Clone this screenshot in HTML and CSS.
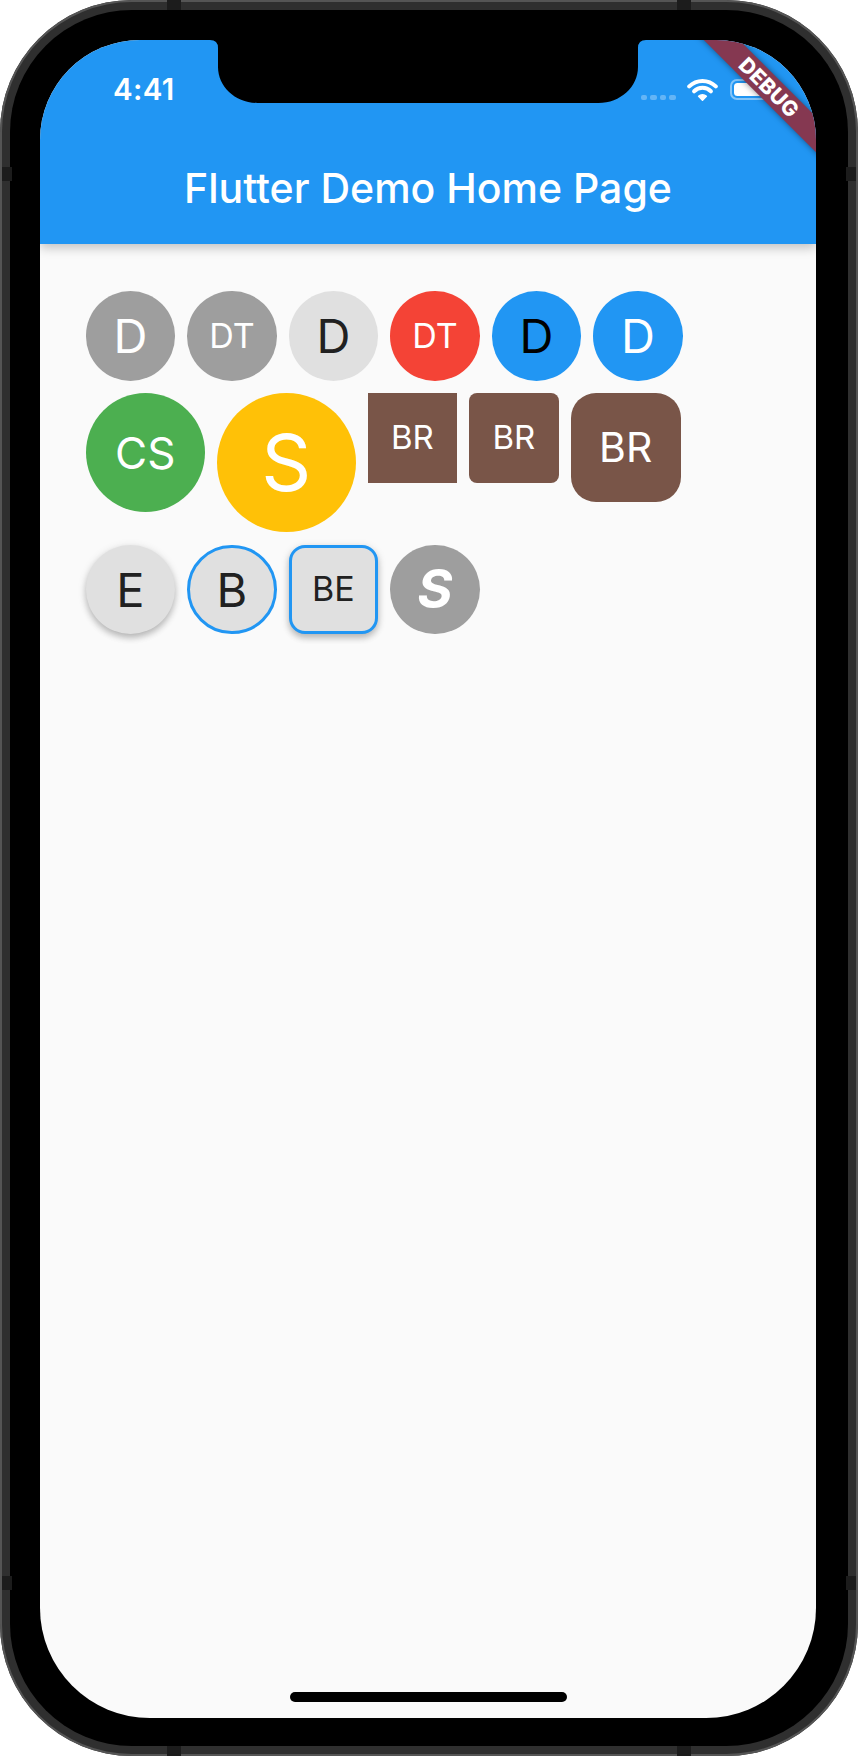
FILE: index.html
```html
<!DOCTYPE html>
<html lang="en">
<head>
<meta charset="utf-8">
<title>Flutter Demo Home Page</title>
<link rel="stylesheet" href="styles.css">
</head>
<body>
<div class="phone">
  <div class="bezel">
    <div class="screen">
      <header class="appbar">
        <div class="status">
          <span class="time">4:41</span>
          <div class="status-icons">
            <div class="signal"><i></i><i></i><i></i><i></i></div>
            <svg class="wifi" viewBox="0 0 31 24" width="31" height="24">
              <path d="M2.2 8.4 A19 19 0 0 1 28.8 8.4" fill="none" stroke="#fff" stroke-width="4" stroke-linecap="round"/>
              <path d="M7.1 13.3 A12 12 0 0 1 23.9 13.3" fill="none" stroke="#fff" stroke-width="4" stroke-linecap="round"/>
              <path d="M15.5 22.2 L11.6 18.3 A5.5 5.5 0 0 1 19.4 18.3 Z" fill="#fff" stroke="#fff" stroke-width="1.5" stroke-linejoin="round"/>
            </svg>
            <div class="battery"><div class="battery-level"></div></div>
          </div>
        </div>
        <div class="toolbar">
          <h1 class="title">Flutter Demo Home Page</h1>
        </div>
      </header>

      <main class="content">
        <div class="avatars">
          <div class="av md circle grey t-white fs-d">D</div>
          <div class="av md circle grey t-white fs-dt">DT</div>
          <div class="av md circle light t-dark fs-d">D</div>
          <div class="av md circle red t-white fs-dt">DT</div>
          <div class="av md circle blue t-black fs-d">D</div>
          <div class="av md circle blue t-white fs-d">D</div>

          <div class="av lg circle green t-white fs-cs">CS</div>
          <div class="av xl circle amber t-white fs-s">S</div>
          <div class="av md brown t-white fs-br">BR</div>
          <div class="av md brown r-sm t-white fs-br">BR</div>
          <div class="av ml brown r-lg t-white fs-br2">BR</div>

          <div class="av md circle light t-dark fs-d elevated">E</div>
          <div class="av md circle light t-dark fs-d bordered">B</div>
          <div class="av md light r-md t-dark fs-dt bordered elevated">BE</div>
          <div class="av md circle grey t-white fs-bi">S</div>
        </div>
      </main>

      <div class="home-indicator"></div>
      <svg class="notch" viewBox="0 0 436 63" width="436" height="63">
        <path d="M0 0 Q8 0 8 8 L8 27 C8 46.9 25.7 63 47.5 63 L388.5 63 C410.3 63 428 46.9 428 27 L428 8 Q428 0 436 0 Z" fill="#000"/>
      </svg>
      <div class="debug-banner">DEBUG</div>
    </div>
  </div>
  <span class="mark mark-top-l"></span>
  <span class="mark mark-top-r"></span>
  <span class="mark mark-bot-l"></span>
  <span class="mark mark-bot-r"></span>
  <span class="mark mark-side-lt"></span>
  <span class="mark mark-side-lb"></span>
  <span class="mark mark-side-rt"></span>
  <span class="mark mark-side-rb"></span>
</div>
</body>
</html>
```

FILE: styles.css
```css
* { box-sizing: border-box; }

html, body {
  margin: 0;
  padding: 0;
  background: #ffffff;
}

body {
  width: 858px;
  height: 1756px;
  overflow: hidden;
  font-family: Inter, "Noto Sans", "Liberation Sans", sans-serif;
}

.phone {
  position: relative;
  width: 858px;
  height: 1756px;
  padding: 10px;
  border-radius: 132px;
  background: #2f2f2f;
  box-shadow: inset 0 0 0 2px #555555;
}

.bezel {
  width: 100%;
  height: 100%;
  padding: 30px;
  border-radius: 122px;
  background: #000000;
}

.screen {
  position: relative;
  width: 776px;
  height: 1678px;
  border-radius: 100px 100px 110px 110px;
  overflow: hidden;
  background: #fafafa;
  display: flex;
  flex-direction: column;
}

/* ---------- App bar ---------- */
.appbar {
  flex: 0 0 204px;
  background: #2196f3;
  color: #ffffff;
  display: flex;
  flex-direction: column;
  box-shadow: 0 4px 10px rgba(0, 0, 0, 0.22);
  position: relative;
  z-index: 1;
}

.status {
  height: 91px;
  padding: 35px 45px 0 73px;
  display: flex;
  justify-content: space-between;
  align-items: flex-start;
}

.time {
  font-size: 29.5px;
  font-weight: 600;
  line-height: 29px;
  letter-spacing: 0.3px;
}

.status-icons {
  height: 29px;
  display: flex;
  align-items: center;
}

.signal {
  height: 23px;
  display: flex;
  align-items: flex-end;
  gap: 3px;
  margin-right: 11px;
  padding-bottom: 1px;
}

.signal i {
  display: block;
  width: 6.5px;
  height: 5px;
  border-radius: 2px;
  background: rgba(255, 255, 255, 0.3);
}

.wifi {
  display: block;
  margin-right: 12.5px;
}

.battery {
  position: relative;
  width: 40.6px;
  height: 21.6px;
  border: 2px solid rgba(255, 255, 255, 0.45);
  border-radius: 7px;
  padding: 2px;
}

.battery::after {
  content: "";
  position: absolute;
  right: -5px;
  top: 6px;
  width: 3px;
  height: 6px;
  border-radius: 0 2px 2px 0;
  background: rgba(255, 255, 255, 0.45);
}

.battery-level {
  width: 100%;
  height: 100%;
  border-radius: 3.5px;
  background: #ffffff;
}

.toolbar {
  flex: 1;
  display: flex;
  align-items: center;
  justify-content: center;
  padding-top: 2px;
}

.title {
  margin: 0;
  font-size: 41px;
  font-weight: 500;
  line-height: 1;
  letter-spacing: 0;
}

/* ---------- Content ---------- */
.content {
  flex: 1;
  padding: 47px 0 0 45.7px;
}

.avatars {
  width: 684px;
  display: flex;
  flex-wrap: wrap;
  align-items: flex-start;
  gap: 12.5px 12px;
}

.av {
  flex: 0 0 auto;
  display: flex;
  align-items: center;
  justify-content: center;
  line-height: 1;
  font-weight: 400;
}

.md { width: 89.5px; height: 89.5px; }
.ml { width: 110px; height: 109px; }
.lg { width: 119px; height: 119px; }
.xl { width: 139px; height: 139px; }

.circle { border-radius: 50%; }
.r-sm { border-radius: 8px; }
.r-md { border-radius: 16px; }
.r-lg { border-radius: 25px; }

.grey  { background: #9e9e9e; }
.light { background: #e0e0e0; }
.red   { background: #f44336; }
.blue  { background: #2196f3; }
.green { background: #4caf50; }
.amber { background: #ffc107; }
.brown { background: #795548; }

.t-white { color: #ffffff; }
.t-dark  { color: #212121; }
.t-black { color: #000000; }

.fs-d   { font-size: 47px; }
.fs-dt  { font-size: 34px; }
.fs-cs  { font-size: 44px; }
.fs-s   { font-size: 78px; }
.fs-br  { font-size: 33px; }
.fs-br2 { font-size: 41px; }
.fs-bi  { font-size: 54px; font-weight: 700; font-style: italic; }

.bordered { border: 3.3px solid #2196f3; }

.elevated {
  box-shadow: 0 4px 6px rgba(0, 0, 0, 0.2), 0 2px 10px rgba(0, 0, 0, 0.12);
}

/* ---------- Overlays ---------- */
.home-indicator {
  position: absolute;
  left: 250px;
  bottom: 15.7px;
  width: 277px;
  height: 10px;
  border-radius: 5px;
  background: #000000;
  z-index: 3;
}

.notch {
  position: absolute;
  top: 0;
  left: 170px;
  display: block;
  z-index: 3;
}

.debug-banner {
  position: absolute;
  left: 619px;
  top: 34.5px;
  width: 220px;
  height: 25px;
  transform: rotate(45deg);
  background: #853851;
  color: #ffffff;
  font-family: Inter, "Liberation Sans", sans-serif;
  font-size: 21px;
  font-weight: 800;
  line-height: 25px;
  text-align: center;
  letter-spacing: 0.3px;
  box-shadow: 0 0 6px rgba(0, 0, 0, 0.45);
  z-index: 4;
}

/* antenna lines on the frame */
.mark {
  position: absolute;
  background: #1c1c1c;
}
.mark-top-l, .mark-top-r, .mark-bot-l, .mark-bot-r { width: 14px; height: 10px; }
.mark-top-l { top: 0; left: 167px; }
.mark-top-r { top: 0; left: 677px; }
.mark-bot-l { bottom: 0; left: 167px; }
.mark-bot-r { bottom: 0; left: 677px; }
.mark-side-lt, .mark-side-lb, .mark-side-rt, .mark-side-rb { width: 10px; height: 14px; }
.mark-side-lt { left: 2px; top: 167px; }
.mark-side-lb { left: 2px; top: 1576px; }
.mark-side-rt { right: 2px; top: 167px; }
.mark-side-rb { right: 2px; top: 1576px; }
```
